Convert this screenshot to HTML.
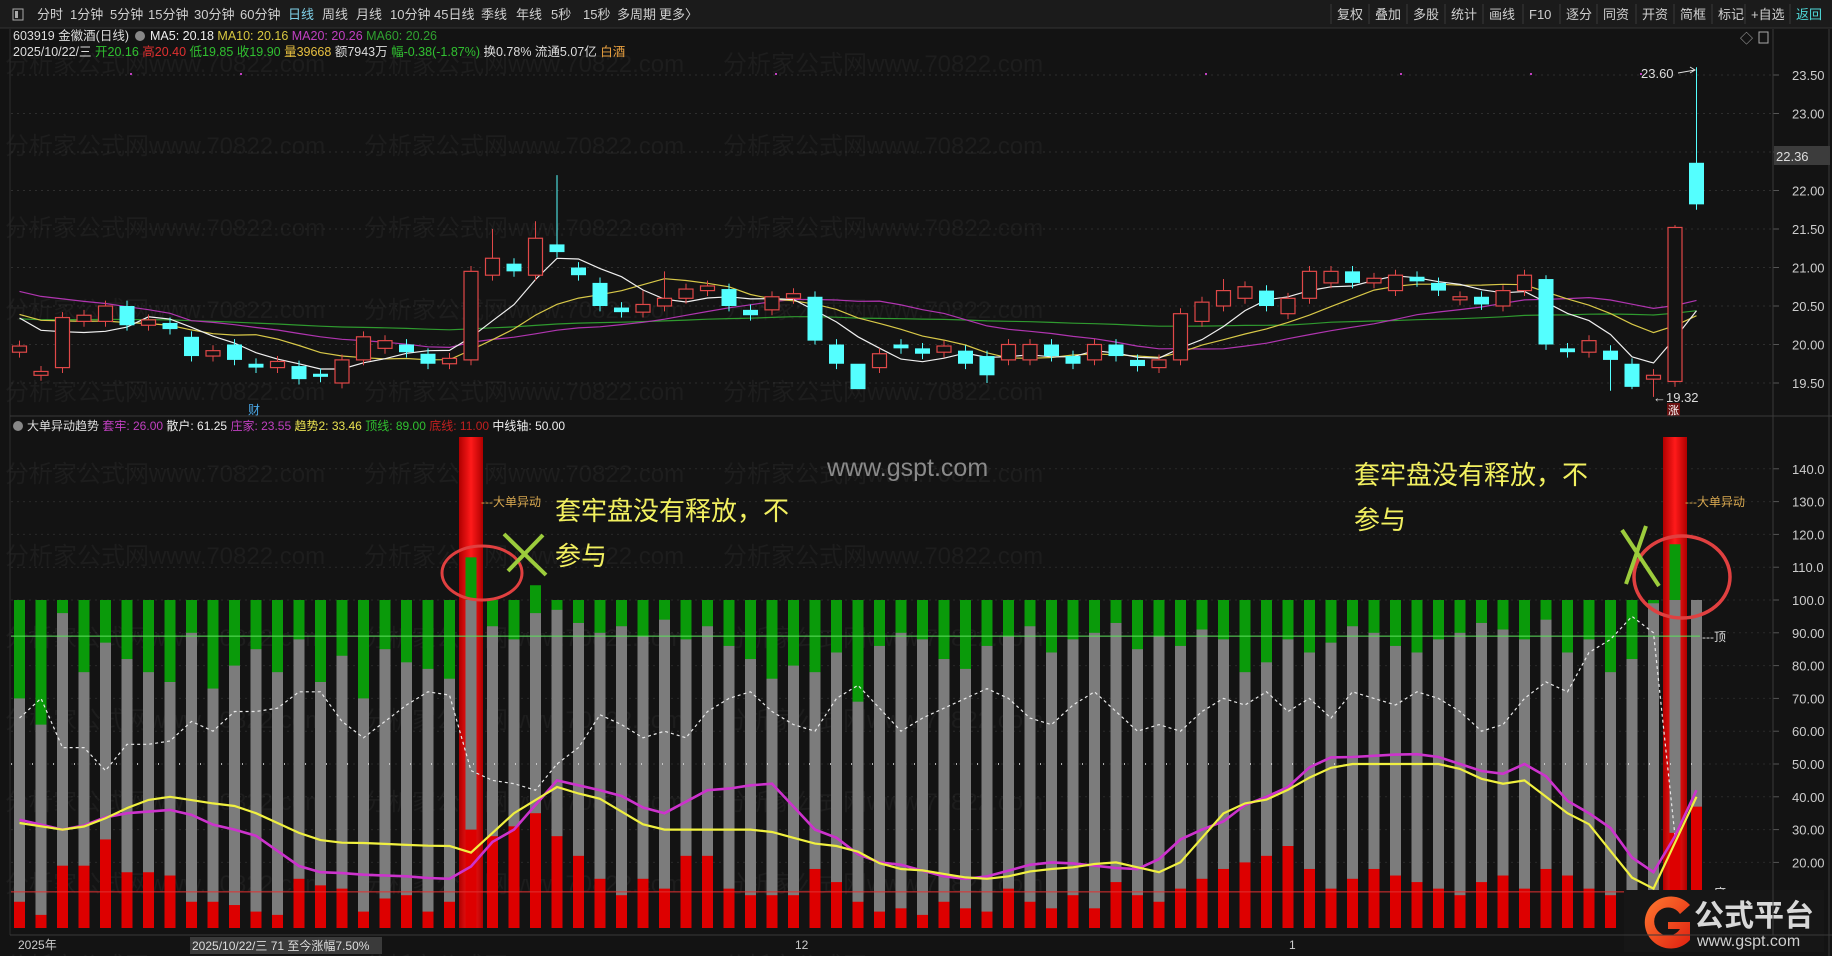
<!DOCTYPE html>
<html><head><meta charset="utf-8">
<style>
html,body{margin:0;padding:0;background:#131313;width:1832px;height:956px;overflow:hidden;}
body{position:relative;font-family:"Liberation Sans","Noto Sans CJK SC",sans-serif;}
svg{position:absolute;left:0;top:0;display:block;}
.t{font-family:"Liberation Sans","Noto Sans CJK SC",sans-serif;}
</style></head>
<body>
<svg id="s" width="1832" height="956" viewBox="0 0 1832 956" xmlns="http://www.w3.org/2000/svg">
<defs>
<linearGradient id="band" x1="0" x2="1" y1="0" y2="0">
<stop offset="0" stop-color="#b00000"/><stop offset="0.5" stop-color="#ff1a1a"/><stop offset="1" stop-color="#b00000"/>
</linearGradient>
<linearGradient id="glogo" x1="0" x2="1" y1="0" y2="1">
<stop offset="0" stop-color="#ff7a30"/><stop offset="1" stop-color="#e02010"/>
</linearGradient>
</defs>
<rect x="0" y="0" width="1832" height="956" fill="#131313"/>
<g id="wm" class="t" fill="#1d1d1d" font-size="24"></g>
<rect x="0" y="0" width="1832" height="28" fill="#1b1b1b"/>
<line x1="0" y1="28" x2="1832" y2="28" stroke="#333"/>
<rect x="13" y="9" width="10" height="11" fill="none" stroke="#aaa"/><rect x="15" y="11" width="3" height="7" fill="#aaa"/>
<g id="menu" class="t" font-size="13" fill="#cfcfcf"></g>
<g id="grid"></g>
<g id="chart"></g>
</svg>
<script>
const NS="http://www.w3.org/2000/svg";
const s=document.getElementById('s');
function el(tag,attrs,parent,text){const e=document.createElementNS(NS,tag);for(const k in attrs)e.setAttribute(k,attrs[k]);if(text!==undefined)e.textContent=text;(parent||s).appendChild(e);return e;}
const wm=document.getElementById('wm');
for(let r=0;r<13;r++){for(let c=0;c<3;c++){el('text',{x:5+c*359,y:72+r*82},wm,'分析家公式网www.70822.com');}}
const menu=document.getElementById('menu');
const L=[['分时',37],['1分钟',70],['5分钟',110],['15分钟',148],['30分钟',194],['60分钟',240],['日线',288],['周线',322],['月线',356],['10分钟',390],['45日线',434],['季线',481],['年线',516],['5秒',551],['15秒',583],['多周期',617],['更多〉',659]];
L.forEach(([t,x])=>el('text',{x:x,y:19,fill:t=='日线'?'#7fd0e8':'#cfcfcf'},menu,t));
const R=[['复权',1337],['叠加',1375],['多股',1413],['统计',1451],['画线',1489],['F10',1529],['逐分',1566],['同资',1603],['开资',1642],['简框',1680],['标记',1718],['+自选',1751],['返回',1796]];
R.forEach(([t,x],i)=>{el('text',{x:x,y:19,fill:t=='返回'?'#4fd8d8':'#cfcfcf'},menu,t);el('line',{x1:x-6,y1:4,x2:x-6,y2:24,stroke:'#3a3a3a'},menu);});
el('line',{x1:10,y1:29,x2:10,y2:935,stroke:'#2c2c2c'});
el('line',{x1:1773,y1:29,x2:1773,y2:935,stroke:'#3a3a3a'});
el('line',{x1:1829,y1:29,x2:1829,y2:956,stroke:'#3a3a3a'});
el('line',{x1:10,y1:416,x2:1832,y2:416,stroke:'#3a3a3a'});
el('line',{x1:10,y1:935,x2:1832,y2:935,stroke:'#3a3a3a'});
el('text',{x:13,y:40,'font-size':12.5,class:'t',fill:'#ddd'},s,'603919 金徽酒(日线)');
el('circle',{cx:140,cy:36,r:5,fill:'#888'});
const hd=el('text',{x:150,y:40,'font-size':12.5,class:'t',fill:'#ddd'});
[['MA5: 20.18 ','#eee'],[' MA10: 20.16 ','#d8c840'],[' MA20: 20.26 ','#c040c0'],[' MA60: 20.26','#30a030']].forEach(([t,c])=>el('tspan',{fill:c},hd,t));
const hd2=el('text',{x:13,y:56,'font-size':12.5,class:'t'});
[['2025/10/22/三 ','#ddd'],['开20.16 ','#30c030'],['高20.40 ','#e03030'],['低19.85 ','#30c030'],['收19.90 ','#30c030'],['量39668 ','#e8c040'],['额7943万 ','#ddd'],['幅-0.38(-1.87%) ','#30c030'],['换0.78% 流通5.07亿 ','#ddd'],['白酒','#e8a040']].forEach(([t,c])=>el('tspan',{fill:c},hd2,t));
el('text',{x:1740,y:43,'font-size':13,fill:'#aaa',class:'t'},s,'◇');
el('rect',{x:1759,y:32,width:9,height:11,fill:'none',stroke:'#aaa'});
const X0=19.5,S=21.5;const x=i=>X0+S*i;
const py=p=>75+(23.5-p)*77;
const vy=v=>928-v*3.28;
const grid=document.getElementById('grid');
for(let p=19.5;p<=23.51;p+=0.5){const y=py(p);el('line',{x1:11,y1:y,x2:1773,y2:y,stroke:'#2e2e2e','stroke-dasharray':'2 4'},grid);el('text',{x:1792,y:y+5,'font-size':13,fill:'#ccc',class:'t'},grid,p.toFixed(2));el('line',{x1:1773,y1:y,x2:1779,y2:y,stroke:'#555'},grid);}
for(let v=20;v<=140;v+=10){const y=vy(v);el('line',{x1:11,y1:y,x2:1773,y2:y,stroke:'#2a2a2a','stroke-dasharray':'2 4'},grid);el('text',{x:1792,y:y+5,'font-size':13,fill:'#ccc',class:'t'},grid,v>=100?v.toFixed(1):v.toFixed(2));el('line',{x1:1773,y1:y,x2:1779,y2:y,stroke:'#555'},grid);}
el('rect',{x:1774,y:146,width:56,height:19,fill:'#3c3c3c'});
el('text',{x:1776,y:161,'font-size':13,fill:'#ddd',class:'t'},s,'22.36');
const ch=document.getElementById('chart');
const C=[[19.9,19.98],[19.6,19.65],[19.7,20.35],[20.3,20.38],[20.3,20.5],[20.5,20.25],[20.25,20.32],[20.28,20.2],[20.1,19.85],[19.85,19.92],[20.0,19.8],[19.75,19.7],[19.7,19.78],[19.72,19.55],[19.62,19.58],[19.5,19.8],[19.8,20.1],[19.95,20.05],[20.0,19.9],[19.88,19.75],[19.75,19.82],[19.8,20.95],[20.9,21.12],[21.05,20.95],[20.9,21.38],[21.3,21.2],[21.0,20.9],[20.8,20.5],[20.48,20.42],[20.42,20.52],[20.5,20.6],[20.6,20.72],[20.7,20.76],[20.72,20.5],[20.45,20.38],[20.45,20.62],[20.6,20.66],[20.62,20.05],[20.0,19.75],[19.75,19.42],[19.7,19.88],[20.0,19.95],[19.95,19.88],[19.9,19.98],[19.92,19.75],[19.85,19.6],[19.8,20.0],[19.8,20.0],[20.0,19.85],[19.85,19.75],[19.8,20.0],[20.0,19.85],[19.8,19.72],[19.7,19.8],[19.8,20.4],[20.3,20.55],[20.5,20.7],[20.6,20.75],[20.7,20.5],[20.4,20.6],[20.6,20.95],[20.8,20.95],[20.95,20.8],[20.8,20.86],[20.7,20.9],[20.88,20.82],[20.8,20.7],[20.58,20.62],[20.62,20.52],[20.5,20.7],[20.7,20.9],[20.85,20.0],[19.95,19.9],[19.9,20.05],[19.92,19.8],[19.75,19.45],[19.55,19.6],[19.52,21.52],[22.36,21.82]];
const n=79;while(C.length<n)C.splice(C.length-3,0,[20.5,20.55]);
const HI={24:21.6,25:22.2,39:19.35,71:20.9,76:19.68,77:21.55,78:23.6,22:21.5,29:20.7,30:20.95,56:20.85};
const LO={76:19.32,77:19.45,39:19.35,75:19.42,74:19.4,37:20.0,45:19.5};
[21,77].forEach(i=>{el('rect',{x:x(i)-12,y:437,width:24,height:491,fill:'url(#band)'},ch);});
const G=[70,62,96,78,87,82,78,75,90,73,80,85,78,88,75,83,70,85,81,79,76,100,92,88,96,97,93,90,92,89,94,88,92,86,82,76,80,78,84,69,86,90,88,82,79,86,89,92,84,88,90,93,85,89,86,91,88,78,81,88,84,87,92,90,86,84,88,90,93,91,88,94,96,95,92,90,89,100,100];
const Rv=[8,4,19,19,27,17,17,16,8,8,7,5,4,15,13,12,5,9,10,5,8,30,28,31,35,28,22,15,10,15,12,22,22,12,10,10,10,18,14,8,5,6,4,8,6,5,12,8,6,10,6,14,10,8,12,15,18,20,22,25,18,12,15,18,16,14,12,10,14,16,12,18,16,12,10,8,9,29,37];
G[72]=84;G[73]=88;G[74]=78;G[75]=82;G[76]=99;
for(let i=0;i<n;i++){const cx=x(i);const g=G[i]??88,r=Rv[i]??10;
el('rect',{x:cx-5.5,y:vy(100),width:11,height:vy(0)-vy(100),fill:'#7c7c7c'},ch);
if(g<100)el('rect',{x:cx-5.5,y:vy(100),width:11,height:vy(g)-vy(100),fill:'#0a9a0a'},ch);
el('rect',{x:cx-5.5,y:vy(r),width:11,height:vy(0)-vy(r),fill:'#dd0000'},ch);}
el('rect',{x:x(21)-5.5,y:vy(113),width:11,height:vy(100)-vy(113),fill:'#0a9a0a'},ch);
el('rect',{x:x(24)-5.5,y:vy(104.5),width:11,height:vy(100)-vy(104.5),fill:'#0a9a0a'},ch);
el('rect',{x:x(77)-5.5,y:vy(117),width:11,height:vy(100)-vy(117),fill:'#0a9a0a'},ch);
el('line',{x1:11,y1:vy(50),x2:1700,y2:vy(50),stroke:'#ddd','stroke-dasharray':'1 20','stroke-width':1.5},ch);
el('line',{x1:11,y1:vy(89),x2:1700,y2:vy(89),stroke:'#5ee05e','stroke-width':1},ch);
el('line',{x1:11,y1:vy(11),x2:1700,y2:vy(11),stroke:'#e03030','stroke-width':1},ch);
el('text',{x:1702,y:vy(89)+5,'font-size':12,fill:'#ddd',class:'t'},ch,'---顶');
el('text',{x:1702,y:vy(11)+5,'font-size':12,fill:'#ddd',class:'t'},ch,'---底');
const W=[64,70,55,55,48,56,56,57,63,60,66,66,67,72,72,63,58,63,68,72,71,48,45,44,42,50,55,65,62,58,60,58,66,70,72,66,62,60,70,74,67,60,64,67,70,73,70,64,62,68,72,66,60,62,60,66,70,68,72,66,70,64,72,70,68,72,70,66,60,62,70,75,72,84,88,95,90,28,42];
function pl(vals,attrs){el('polyline',Object.assign({points:vals.map((v,i)=>x(i).toFixed(1)+','+vy(v).toFixed(1)).join(' '),fill:'none'},attrs),ch);}
pl(W,{stroke:'#e8e8e8','stroke-width':1.2,'stroke-dasharray':'3 3'});
function interp(kp){const out=[];for(let i=0;i<n;i++){let a=kp[0],b=kp[kp.length-1];for(let k=0;k<kp.length-1;k++){if(i>=kp[k][0]&&i<=kp[k+1][0]){a=kp[k];b=kp[k+1];break;}}const t=b[0]==a[0]?0:(i-a[0])/(b[0]-a[0]);const tt=(1-Math.cos(Math.PI*t))/2;out.push(a[1]+(b[1]-a[1])*tt);}return out;}
const Y=interp([[0,32],[2,30],[7,40],[9,38],[15,26],[20,25],[21,23],[23,35],[25,43],[26,41],[30,30],[34,30],[38,25],[41,18],[45,15],[48,18],[51,20],[53,17],[57,38],[62,50],[66,50],[69,44],[70,45],[72,35],[76,12],[78,40]]);
const M=interp([[0,33],[2,30],[5,35],[7,36],[10,30],[14,17],[17,16],[20,15],[23,30],[25,45],[27,42],[30,35],[32,42],[35,44],[37,30],[40,20],[44,15],[48,20],[52,18],[55,30],[58,40],[61,52],[65,53],[69,47],[70,50],[73,35],[76,17],[77,28],[78,42]]);
pl(M,{stroke:'#cc33cc','stroke-width':2.6});
pl(Y,{stroke:'#f0f040','stroke-width':2.2});
el('text',{x:x(21)+10,y:506,'font-size':12,fill:'#d8a850',class:'t'},ch,'---大单异动');
el('text',{x:x(77)+10,y:506,'font-size':12,fill:'#d8a850',class:'t'},ch,'---大单异动');
const cl=[];for(let i=0;i<n;i++)cl.push(C[i][1]);
const pre=[];for(let k=0;k<60;k++)pre.push(20.25+0.2*Math.sin(k/7));
const all=pre.concat(cl);
function ma(p){return cl.map((_,i)=>{const j=i+60;let s=0;for(let k=j-p+1;k<=j;k++)s+=all[k];return s/p;});}
function pline(vals,col,w){el('polyline',{points:vals.map((v,i)=>x(i).toFixed(1)+','+py(v).toFixed(1)).join(' '),fill:'none',stroke:col,'stroke-width':w},ch);}
let m60=ma(60).map(v=>v+0.05),m20=ma(20),m10=ma(10),m5=ma(5);
m20=m20.map((v,i)=>i<8?v+0.35-i*0.04:v);
pline(m60,'#2f9a2f',1.2);pline(m20,'#b035b0',1.2);pline(m10,'#d8c848',1.2);pline(m5,'#f0f0f0',1.2);
for(let i=0;i<n;i++){const [o,c]=C[i];const cx=x(i);const up=c>=o;const col=up?'#e04848':'#54ffff';
const hi=HI[i]??Math.max(o,c)+0.07,lo=LO[i]??Math.min(o,c)-0.07;
el('line',{x1:cx,y1:py(hi),x2:cx,y2:py(lo),stroke:col,'stroke-width':1},ch);
const top=py(Math.max(o,c)),bot=py(Math.min(o,c));const h=Math.max(bot-top,1.5);
if(up)el('rect',{x:cx-7,y:top,width:14,height:h,fill:'#131313',stroke:col,'stroke-width':1.2},ch);
else el('rect',{x:cx-7.5,y:top,width:15,height:h,fill:col},ch);}
[130,240,775,1205,1400,1530,1640].forEach(xx=>el('rect',{x:xx,y:73,width:2,height:2,fill:'#c040c0'},ch));
el('text',{x:1641,y:78,'font-size':13,fill:'#ddd',class:'t'},ch,'23.60');
el('path',{d:'M1678 73 L1695 70 M1690 67 L1695 70 L1690 73',stroke:'#ddd',fill:'none'},ch);
el('text',{x:1653,y:402,'font-size':13,fill:'#ddd',class:'t'},ch,'←19.32');
el('rect',{x:1667,y:403,width:13,height:13,fill:'#6a1010'},ch);
el('text',{x:1668,y:414,'font-size':11,fill:'#fff',class:'t'},ch,'涨');
el('text',{x:248,y:414,'font-size':12,fill:'#4aa8e8',class:'t'},ch,'财');
el('circle',{cx:18,cy:426,r:5,fill:'#888'},ch);
const ih=el('text',{x:27,y:430,'font-size':12,class:'t'},ch);
[['大单异动趋势 ','#ddd'],['套牢: 26.00 ','#c040c0'],['散户: 61.25 ','#eee'],['庄家: 23.55 ','#c040c0'],['趋势2: 33.46 ','#e8e050'],['顶线: 89.00 ','#30c030'],['底线: 11.00 ','#c02020'],['中线轴: 50.00','#eee']].forEach(([t,c])=>el('tspan',{fill:c},ih,t));
el('text',{x:827,y:476,'font-size':25,fill:'#8a8a8a',class:'t'},ch,'www.gspt.com');
el('text',{x:555,y:520,'font-size':26,fill:'#f2f060',class:'t'},ch,'套牢盘没有释放，不');
el('text',{x:555,y:565,'font-size':26,fill:'#f2f060',class:'t'},ch,'参与');
el('text',{x:1354,y:484,'font-size':26,fill:'#f2f060',class:'t'},ch,'套牢盘没有释放，不');
el('text',{x:1354,y:529,'font-size':26,fill:'#f2f060',class:'t'},ch,'参与');
el('ellipse',{cx:482,cy:573,rx:40,ry:27,fill:'none',stroke:'#e04040','stroke-width':3},ch);
el('ellipse',{cx:1682,cy:577,rx:48,ry:41,fill:'none',stroke:'#e04040','stroke-width':3.5},ch);
el('path',{d:'M504 534 L546 575 M543 535 L508 571',stroke:'#9ccc3c','stroke-width':4,fill:'none'},ch);
el('path',{d:'M1622 530 L1659 586 M1646 526 L1626 584',stroke:'#9ccc3c','stroke-width':4,fill:'none'},ch);
el('text',{x:18,y:949,'font-size':12,fill:'#ccc',class:'t'},ch,'2025年');
el('rect',{x:190,y:937,width:192,height:17,fill:'#3a3a3a'},ch);
el('text',{x:192,y:950,'font-size':12,fill:'#ddd',class:'t'},ch,'2025/10/22/三 71 至今涨幅7.50%');
el('text',{x:795,y:949,'font-size':12,fill:'#ccc',class:'t'},ch,'12');
el('text',{x:1289,y:949,'font-size':12,fill:'#ccc',class:'t'},ch,'1');
el('rect',{x:1624,y:890,width:200,height:62,fill:'#161616'},ch);
el('path',{d:'M1690 905 A26 26 0 1 0 1690 940 L1690 922 L1668 922 L1668 929 L1680 929 A14 14 0 1 1 1680 914 Z',fill:'url(#glogo)'},ch);
el('text',{x:1694,y:926,'font-size':30,'font-weight':'bold',fill:'#d8d8d8',class:'t'},ch,'公式平台');
el('text',{x:1697,y:946,'font-size':16,fill:'#cfcfcf',class:'t'},ch,'www.gspt.com');
</script>
</body></html>
